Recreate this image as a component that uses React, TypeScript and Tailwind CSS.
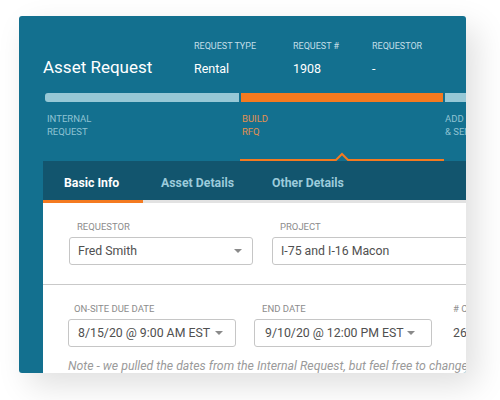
import React from "react";

type SelectProps = {
  label: string;
  value: string;
  width: string;
  labelPad: string;
  textPad: string;
};

function Caret() {
  return (
    <svg width="8" height="4" viewBox="0 0 8 4" className="shrink-0" aria-hidden>
      <path d="M0 0 H8 L4 4 Z" fill="#8a8a8a" />
    </svg>
  );
}

function SelectField({ label, value, width, labelPad, textPad }: SelectProps) {
  return (
    <div className={`flex shrink-0 flex-col ${width}`}>
      <span className={`text-[9.5px] leading-[12px] uppercase text-[#8c8c8c] ${labelPad}`}>{label}</span>
      <div
        className={`mt-[4px] flex h-[28px] items-center justify-between rounded-[3px] border border-[#c6c6c6] pr-[10px] text-[12.3px] text-[#505050] ${textPad}`}
      >
        <span className="whitespace-nowrap">{value}</span>
        <Caret />
      </div>
    </div>
  );
}

const headerCols = [
  { label: "Request Type", value: "Rental", w: "w-[99px]" },
  { label: "Request #", value: "1908", w: "w-[79px]" },
  { label: "Requestor", value: "-", w: "w-[90px]" },
];

export default function App() {
  return (
    <div
      className="min-h-screen bg-white pl-[19px] pt-[16px]"
      style={{ fontFamily: "Roboto, 'Liberation Sans', sans-serif" }}
    >
      <div className="flex h-[357px] w-[447px] flex-col overflow-hidden rounded-[3px] bg-[#13708f] pl-[24px] shadow-[10px_12px_32px_rgba(0,0,0,0.13)]">
        {/* header */}
        <div className="flex shrink-0 pt-[24px]">
          <div className="w-[151px] shrink-0 pt-[17px] text-[17px] leading-[21px] text-white">Asset Request</div>
          {headerCols.map((c) => (
            <div key={c.label} className={`flex shrink-0 flex-col ${c.w}`}>
              <span className="text-[9px] leading-[12px] uppercase text-[#c3dfe8]">{c.label}</span>
              <span className="mt-[9px] text-[12.5px] leading-[16px] text-white">{c.value}</span>
            </div>
          ))}
        </div>

        {/* progress */}
        <div className="ml-[2px] mt-[15px] flex h-[9px] w-[600px] shrink-0 gap-[2px]">
          <div className="w-[194px] rounded-l-[3px] bg-[#97c8d6]" />
          <div className="w-[202px] bg-[#f47a20]" />
          <div className="flex-1 bg-[#97c8d6]" />
        </div>
        <div className="ml-[4px] mt-[10px] flex w-[600px] shrink-0 text-[9.5px] leading-[13px] uppercase">
          <div className="w-[195px] text-[#8fc3d3]">
            Internal
            <br />
            Request
          </div>
          <div className="w-[203px] text-[#e3914f]">
            Build
            <br />
            RFQ
          </div>
          <div className="text-[#8fc3d3]">
            Add
            <br />& Send
          </div>
        </div>
        <div className="ml-[197px] mt-[14px] shrink-0">
          <svg width="204" height="9" viewBox="0 0 204 9" className="block" aria-hidden>
            <path d="M0 8 H96 L102 2 L108 8 H204" fill="none" stroke="#f47a20" strokeWidth="2" />
          </svg>
        </div>

        {/* panel */}
        <div className="flex flex-1 flex-col bg-white">
          <div className="flex h-[39px] shrink-0 bg-[#12556e] pt-[15px] text-[12.3px] leading-[15px] font-bold">
            <div className="w-[100px] pl-[21px] text-white">Basic Info</div>
            <div className="w-[111px] pl-[18px] text-[#9ccbdb]">Asset Details</div>
            <div className="pl-[18px] text-[#9ccbdb]">Other Details</div>
          </div>
          <div className="flex h-[3px] shrink-0 bg-[#e2e2e2]">
            <div className="w-[100px] bg-[#f47a20]" />
          </div>

          <div className="flex shrink-0 gap-[19px] pl-[26px] pt-[18px] pb-[19px]">
            <SelectField label="Requestor" value="Fred Smith" width="w-[184px]" labelPad="pl-[8px]" textPad="pl-[8px]" />
            <div className="flex w-[250px] shrink-0 flex-col">
              <span className="pl-[8px] text-[9.5px] leading-[12px] uppercase text-[#8c8c8c]">Project</span>
              <div className="mt-[4px] flex h-[28px] items-center rounded-[3px] border border-[#c6c6c6] pl-[8px] text-[12.3px] text-[#505050]">
                I-75 and I-16 Macon
              </div>
            </div>
          </div>

          <div className="h-px shrink-0 bg-[#c9c9c9]" />

          <div className="flex shrink-0 gap-[18px] pl-[25px] pt-[18px]">
            <SelectField
              label="On-Site Due Date"
              value="8/15/20 @ 9:00 AM EST"
              width="w-[168px]"
              labelPad="pl-[6px]"
              textPad="pl-[9px] pr-[12px]"
            />
            <SelectField
              label="End Date"
              value="9/10/20 @ 12:00 PM EST"
              width="w-[178px]"
              labelPad="pl-[8px]"
              textPad="pl-[10px] pr-[16px]"
            />
            <div className="ml-[3px] flex shrink-0 flex-col">
              <span className="text-[9.5px] leading-[12px] uppercase text-[#8c8c8c]"># Containers</span>
              <div className="mt-[4px] flex h-[28px] items-center text-[12.3px] text-[#505050]">26</div>
            </div>
          </div>
          <div className="mt-[11px] whitespace-nowrap pl-[25px] text-[12.3px] leading-[16px] italic text-[#9a9a9a]">
            Note - we pulled the dates from the Internal Request, but feel free to change them.
          </div>
        </div>
      </div>
    </div>
  );
}
